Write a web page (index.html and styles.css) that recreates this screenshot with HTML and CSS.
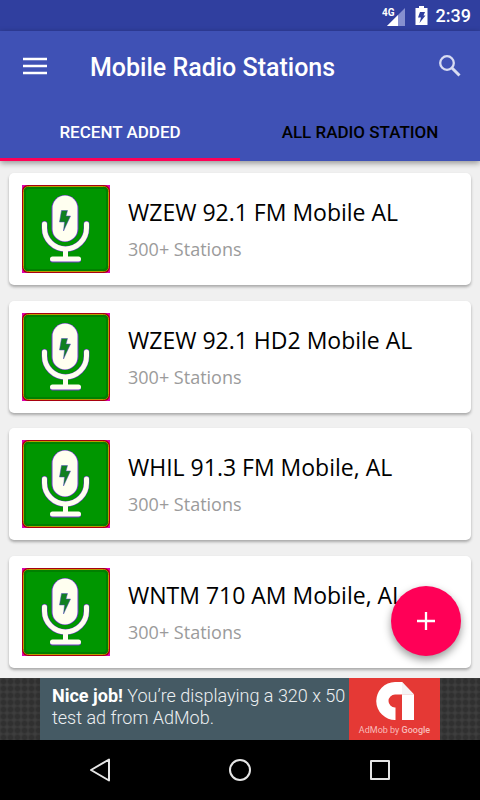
FILE: index.html
```
<!DOCTYPE html>
<html lang="en">
<head>
  <meta charset="UTF-8" />
  <meta name="viewport" content="width=device-width, initial-scale=1.0" />
  <title>Mobile Radio Stations</title>
  <link rel="stylesheet" href="styles.css">
</head>
<body>

  <!-- shared cover icon -->
  <svg class="sprite" aria-hidden="true">
    <symbol id="mic" viewBox="0 0 88 88">
      <rect width="88" height="88" fill="#e000b0" />
      <rect width="88" height="88" rx="6" fill="#a80010" />
      <rect x="1.5" y="1.5" width="85" height="85" rx="5" fill="none" stroke="#b89a00" />
      <rect x="2" y="2" width="84" height="84" rx="4" fill="#008000" />
      <rect x="4" y="4" width="80" height="80" rx="3" fill="#009600" />
      <g fill="none" stroke="#7038c8" stroke-width="6">
        <rect x="30.500" y="11" width="25" height="45" rx="12.500" stroke-width="2" />
        <path d="M22.500 39v4a21 21 0 0 0 42 0v-4" stroke-linecap="round" />
        <path d="M30.500 75h26" stroke-width="5" stroke-linecap="round" />
      </g>
      <g fill="none" stroke="#fffff0" stroke-width="5" stroke-linecap="round">
        <path d="M22.500 39v4a21 21 0 0 0 42 0v-4M43.500 64v9M30.500 74h26" />
      </g>
      <rect x="30.500" y="10.500" width="25" height="46" rx="12.500" fill="#fffff0" />
      <path d="M39.500 25.500h6L44 31h4.500L41.500 46l1-9h-5z" fill="#108020" stroke="#5048c0" stroke-width=".5" />
    </symbol>
  </svg>

  <div class="status-bar">
    <svg width="26" height="24" viewBox="0 0 26 24" role="img" aria-label="Signal">
      <path d="M23 4v18H5z" fill="#8690cf" />
      <path d="M16 11v11H5z" fill="#fff" />
      <text x="0" y="12" class="network">4G</text>
    </svg>
    <svg class="battery" width="14" height="20" viewBox="0 0 14 20" role="img" aria-label="Charging">
      <path d="M4 0h5v2h3.500v17h-12V2H4z" fill="#fff" />
      <path d="M5 6h5L8.500 9.500h2L4.500 17l1.500-5.500H3z" fill="#303f9f" />
    </svg>
    <time>2:39</time>
  </div>

  <header>
    <div class="toolbar">
      <button class="icon-button" aria-label="Menu">
        <svg width="24" height="18" viewBox="0 0 24 18"><path d="M0 2h24M0 9h24M0 16h24" stroke="#fff" stroke-width="2.500" /></svg>
      </button>
      <h1>Mobile Radio Stations</h1>
      <button class="icon-button" aria-label="Search">
        <svg width="22" height="22" viewBox="0 0 22 22" fill="none" stroke="#d8dcf2">
          <circle cx="8" cy="8" r="6.800" stroke-width="2.300" />
          <path d="M13 13l7.500 7.500" stroke-width="3" />
        </svg>
      </button>
    </div>
    <nav class="tabs">
      <button class="tab active">RECENT ADDED</button>
      <button class="tab">ALL RADIO STATION</button>
    </nav>
  </header>

  <main>
    <ul class="stations">
      <li class="card">
        <svg class="cover"><use href="#mic" /></svg>
        <div>
          <h2>WZEW 92.1 FM Mobile AL</h2>
          <p>300+ Stations</p>
        </div>
      </li>
      <li class="card">
        <svg class="cover"><use href="#mic" /></svg>
        <div>
          <h2>WZEW 92.1 HD2 Mobile AL</h2>
          <p>300+ Stations</p>
        </div>
      </li>
      <li class="card">
        <svg class="cover"><use href="#mic" /></svg>
        <div>
          <h2>WHIL 91.3 FM Mobile, AL</h2>
          <p>300+ Stations</p>
        </div>
      </li>
      <li class="card">
        <svg class="cover"><use href="#mic" /></svg>
        <div>
          <h2>WNTM 710 AM Mobile, AL</h2>
          <p>300+ Stations</p>
        </div>
      </li>
    </ul>
    <button class="fab" aria-label="Add">
      <svg width="18" height="18" viewBox="0 0 18 18"><path d="M9 0v18M0 9h18" stroke="#fff" stroke-width="2.300" /></svg>
    </button>
  </main>

  <aside class="ad">
    <div class="banner">
      <p><strong>Nice job!</strong> You’re displaying a 320 x 50 test ad from AdMob.</p>
      <div class="admob">
        <svg width="38" height="38" viewBox="0 0 38 38" role="img" aria-label="AdMob">
          <path d="M19.500 38A19 19 0 0 1 19 0h7l12 12.500H19a6.500 6.500 0 0 0 0 13h.5z" fill="#fff" />
          <path d="M26 12.500h12V38H26z" fill="#fff" />
          <path d="M26 0l12 12.500H26z" fill="#f4f4f4" />
        </svg>
        <span>AdMob by <b>Google</b></span>
      </div>
    </div>
  </aside>

  <nav class="nav-bar">
    <button aria-label="Back">
      <svg width="24" height="24" viewBox="0 0 24 24"><path d="M21 1.500v21L3 12z" /></svg>
    </button>
    <button aria-label="Home">
      <svg width="24" height="24" viewBox="0 0 24 24"><circle cx="12" cy="12" r="10" /></svg>
    </button>
    <button aria-label="Overview">
      <svg width="24" height="24" viewBox="0 0 24 24"><rect x="3" y="3" width="18" height="18" /></svg>
    </button>
  </nav>

</body>
</html>
```
FILE: styles.css
```
:root {
  --primary: #3f51b5;
  --primary-dark: #303f9f;
  --accent: #ff0057;
}
* {
  box-sizing: border-box;
}
body {
  margin: 0;
  min-height: 100vh;
  display: flex;
  flex-direction: column;
  background: #f0f0f0;
  font-family: Roboto, sans-serif;
}
h1, h2, p, ul {
  margin: 0;
  padding: 0;
}
button {
  border: 0;
  padding: 0;
  background: none;
  font-family: inherit;
}
svg {
  display: block;
}
.sprite {
  position: absolute;
  width: 0;
  height: 0;
}
.status-bar {
  display: flex;
  align-items: center;
  justify-content: flex-end;
  height: 31px;
  padding-right: 9px;
  background: var(--primary-dark);
  color: #fff;
  font-size: 18px;
  font-weight: 500;
}
.network {
  font-size: 10px;
  font-weight: 700;
  fill: #fff;
}
.battery {
  margin: 0 7px;
}
header {
  position: relative;
  background: var(--primary);
  box-shadow: 0 2px 6px rgba(0, 0, 0, 0.4);
}
.toolbar {
  display: flex;
  align-items: center;
  height: 72px;
  padding: 0 7px 2px 12px;
}
.icon-button {
  display: flex;
  align-items: center;
  justify-content: center;
  width: 46px;
  height: 46px;
}
h1 {
  flex: 1;
  padding: 3px 0 0 32px;
  color: #fff;
  font-size: 25px;
  font-weight: 500;
}
.tabs {
  display: grid;
  grid-template-columns: 1fr 1fr;
}
.tab {
  height: 58px;
  padding-top: 2px;
  border-bottom: 3px solid transparent;
  color: #000;
  font-size: 17px;
  font-weight: 500;
}
.tab.active {
  border-color: var(--accent);
  color: #fff;
}
main {
  position: relative;
  flex: 1;
  display: flex;
}
.stations {
  flex: 1;
  display: flex;
  flex-direction: column;
  justify-content: space-between;
  padding: 12px 9px 10px;
  list-style: none;
}
.card {
  display: flex;
  align-items: center;
  gap: 18px;
  padding: 12px 13px;
  border-radius: 5px;
  background: #fff;
  box-shadow: 0 2px 3px rgba(0, 0, 0, 0.3);
}
.cover {
  width: 88px;
  height: 88px;
}
.card h2 {
  font: 400 23px/32px "Open Sans", sans-serif;
}
.card p {
  margin-top: 8px;
  color: #9b9b9b;
  font: 18px/26px "Open Sans", sans-serif;
}
.fab {
  position: absolute;
  right: 19px;
  bottom: 22px;
  display: flex;
  align-items: center;
  justify-content: center;
  width: 70px;
  height: 70px;
  border-radius: 50%;
  background: var(--accent);
  box-shadow: 0 4px 8px rgba(0, 0, 0, 0.4);
}
.ad {
  display: flex;
  justify-content: center;
  background: radial-gradient(circle, #303030 2px, #3e3e3e 4px) 0 0 / 7px 7px;
}
.banner {
  display: flex;
  width: 400px;
  height: 62px;
  background: #455a64;
}
.banner p {
  flex: 1;
  padding: 7px 0 0 12px;
  color: #eceff1;
  font-size: 18px;
  font-weight: 300;
  line-height: 22px;
}
.banner strong {
  color: #fff;
  font-weight: 700;
}
.admob {
  display: flex;
  flex-direction: column;
  align-items: center;
  width: 91px;
  padding-top: 4px;
  background: #e53935;
  color: #f8bcba;
  font-size: 9px;
  line-height: 20px;
}
.admob b {
  font-weight: 500;
}
.nav-bar {
  display: grid;
  grid-template-columns: repeat(3, 1fr);
  height: 60px;
  padding: 0 30px;
  background: #000;
}
.nav-bar svg {
  margin: auto;
  fill: none;
  stroke: #e6e6e6;
  stroke-width: 2;
  stroke-linejoin: round;
}
```
